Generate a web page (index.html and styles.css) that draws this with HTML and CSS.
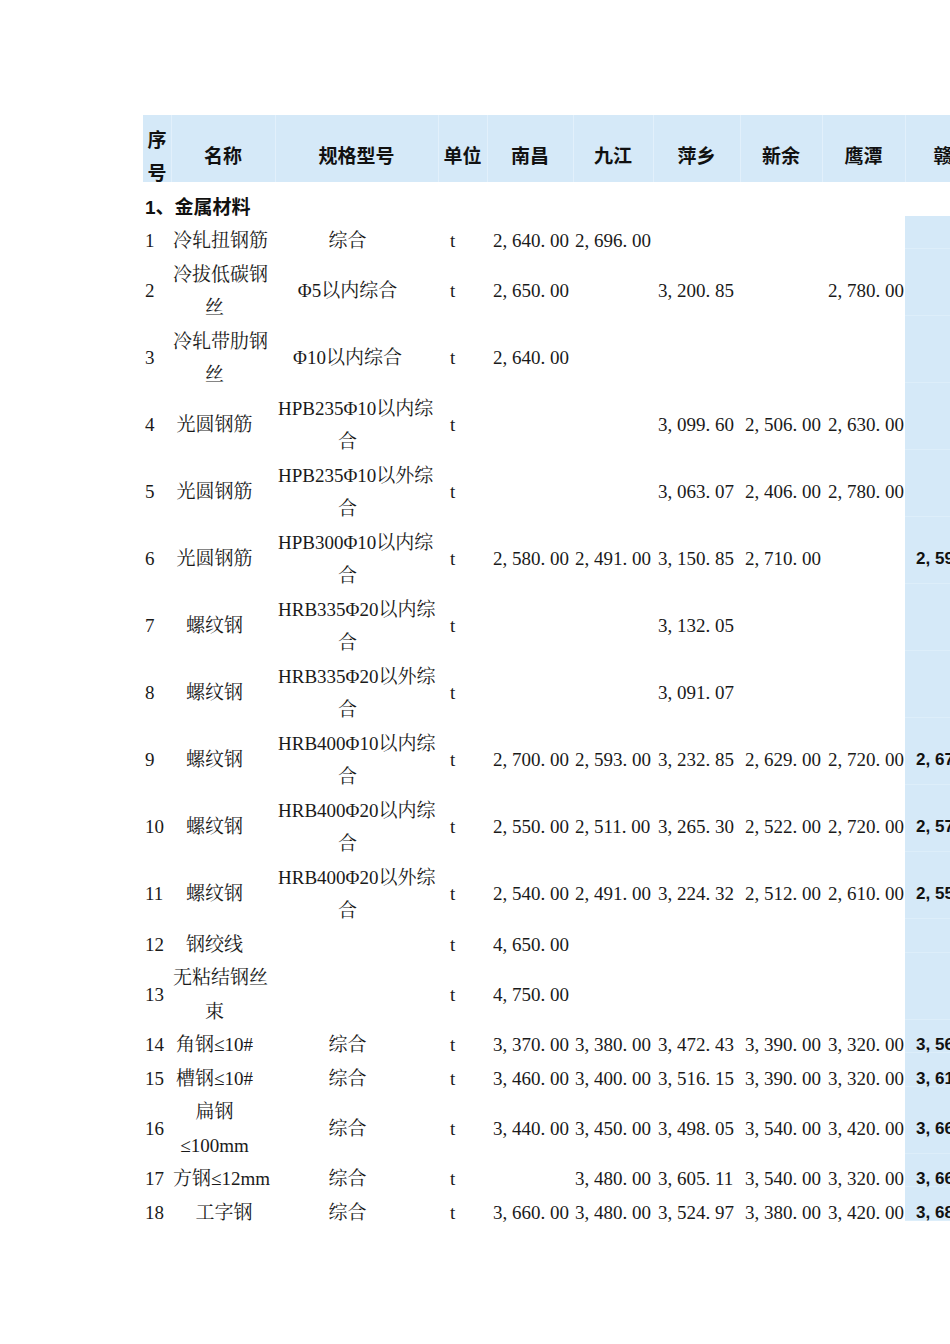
FILE: index.html
```html
<!DOCTYPE html>
<html lang="zh-CN">
<head>
<meta charset="utf-8">
<title>材料价格表</title>
<link rel="stylesheet" href="styles.css">
</head>
<body>
<div class="page">
<table class="price">
<colgroup>
<col class="w-no"><col class="w-name"><col class="w-spec"><col class="w-unit"><col class="w-city"><col class="w-jj"><col class="w-px"><col class="w-xy"><col class="w-yt"><col class="w-gz">
</colgroup>
<thead>
<tr><th>序号</th><th>名称</th><th>规格型号</th><th>单位</th><th>南昌</th><th>九江</th><th>萍乡</th><th>新余</th><th>鹰潭</th><th>赣州</th></tr>
</thead>
<tbody>
<tr class="sec"><td colspan="10">1、金属材料</td></tr>
<tr><td>1</td><td>冷轧扭钢筋</td><td>综合</td><td>t</td><td>2<i>,</i>640<i>.</i>00</td><td>2<i>,</i>696<i>.</i>00</td><td></td><td></td><td></td><td></td></tr>
<tr><td>2</td><td>冷拔低碳钢<br>丝</td><td>Φ5以内综合</td><td>t</td><td>2<i>,</i>650<i>.</i>00</td><td></td><td>3<i>,</i>200<i>.</i>85</td><td></td><td>2<i>,</i>780<i>.</i>00</td><td></td></tr>
<tr><td>3</td><td>冷轧带肋钢<br>丝</td><td>Φ10以内综合</td><td>t</td><td>2<i>,</i>640<i>.</i>00</td><td></td><td></td><td></td><td></td><td></td></tr>
<tr><td>4</td><td>光圆钢筋</td><td>HPB235Φ10以内综<br>合</td><td>t</td><td></td><td></td><td>3<i>,</i>099<i>.</i>60</td><td>2<i>,</i>506<i>.</i>00</td><td>2<i>,</i>630<i>.</i>00</td><td></td></tr>
<tr><td>5</td><td>光圆钢筋</td><td>HPB235Φ10以外综<br>合</td><td>t</td><td></td><td></td><td>3<i>,</i>063<i>.</i>07</td><td>2<i>,</i>406<i>.</i>00</td><td>2<i>,</i>780<i>.</i>00</td><td></td></tr>
<tr><td>6</td><td>光圆钢筋</td><td>HPB300Φ10以内综<br>合</td><td>t</td><td>2<i>,</i>580<i>.</i>00</td><td>2<i>,</i>491<i>.</i>00</td><td>3<i>,</i>150<i>.</i>85</td><td>2<i>,</i>710<i>.</i>00</td><td></td><td>2<i>,</i>590<i>.</i>00</td></tr>
<tr><td>7</td><td>螺纹钢</td><td>HRB335Φ20以内综<br>合</td><td>t</td><td></td><td></td><td>3<i>,</i>132<i>.</i>05</td><td></td><td></td><td></td></tr>
<tr><td>8</td><td>螺纹钢</td><td>HRB335Φ20以外综<br>合</td><td>t</td><td></td><td></td><td>3<i>,</i>091<i>.</i>07</td><td></td><td></td><td></td></tr>
<tr><td>9</td><td>螺纹钢</td><td>HRB400Φ10以内综<br>合</td><td>t</td><td>2<i>,</i>700<i>.</i>00</td><td>2<i>,</i>593<i>.</i>00</td><td>3<i>,</i>232<i>.</i>85</td><td>2<i>,</i>629<i>.</i>00</td><td>2<i>,</i>720<i>.</i>00</td><td>2<i>,</i>670<i>.</i>00</td></tr>
<tr><td>10</td><td>螺纹钢</td><td>HRB400Φ20以内综<br>合</td><td>t</td><td>2<i>,</i>550<i>.</i>00</td><td>2<i>,</i>511<i>.</i>00</td><td>3<i>,</i>265<i>.</i>30</td><td>2<i>,</i>522<i>.</i>00</td><td>2<i>,</i>720<i>.</i>00</td><td>2<i>,</i>570<i>.</i>00</td></tr>
<tr><td>11</td><td>螺纹钢</td><td>HRB400Φ20以外综<br>合</td><td>t</td><td>2<i>,</i>540<i>.</i>00</td><td>2<i>,</i>491<i>.</i>00</td><td>3<i>,</i>224<i>.</i>32</td><td>2<i>,</i>512<i>.</i>00</td><td>2<i>,</i>610<i>.</i>00</td><td>2<i>,</i>550<i>.</i>00</td></tr>
<tr><td>12</td><td>钢绞线</td><td></td><td>t</td><td>4<i>,</i>650<i>.</i>00</td><td></td><td></td><td></td><td></td><td></td></tr>
<tr><td>13</td><td>无粘结钢丝<br>束</td><td></td><td>t</td><td>4<i>,</i>750<i>.</i>00</td><td></td><td></td><td></td><td></td><td></td></tr>
<tr><td>14</td><td>角钢≤10#</td><td>综合</td><td>t</td><td>3<i>,</i>370<i>.</i>00</td><td>3<i>,</i>380<i>.</i>00</td><td>3<i>,</i>472<i>.</i>43</td><td>3<i>,</i>390<i>.</i>00</td><td>3<i>,</i>320<i>.</i>00</td><td>3<i>,</i>560<i>.</i>00</td></tr>
<tr><td>15</td><td>槽钢≤10#</td><td>综合</td><td>t</td><td>3<i>,</i>460<i>.</i>00</td><td>3<i>,</i>400<i>.</i>00</td><td>3<i>,</i>516<i>.</i>15</td><td>3<i>,</i>390<i>.</i>00</td><td>3<i>,</i>320<i>.</i>00</td><td>3<i>,</i>610<i>.</i>00</td></tr>
<tr><td>16</td><td>扁钢<br>≤100mm</td><td>综合</td><td>t</td><td>3<i>,</i>440<i>.</i>00</td><td>3<i>,</i>450<i>.</i>00</td><td>3<i>,</i>498<i>.</i>05</td><td>3<i>,</i>540<i>.</i>00</td><td>3<i>,</i>420<i>.</i>00</td><td>3<i>,</i>660<i>.</i>00</td></tr>
<tr><td>17</td><td>方钢≤12mm</td><td>综合</td><td>t</td><td></td><td>3<i>,</i>480<i>.</i>00</td><td>3<i>,</i>605<i>.</i>11</td><td>3<i>,</i>540<i>.</i>00</td><td>3<i>,</i>320<i>.</i>00</td><td>3<i>,</i>660<i>.</i>00</td></tr>
<tr><td>18</td><td class="indent">工字钢</td><td>综合</td><td>t</td><td>3<i>,</i>660<i>.</i>00</td><td>3<i>,</i>480<i>.</i>00</td><td>3<i>,</i>524<i>.</i>97</td><td>3<i>,</i>380<i>.</i>00</td><td>3<i>,</i>420<i>.</i>00</td><td>3<i>,</i>680<i>.</i>00</td></tr>
</tbody>
</table>
</div>
</body>
</html>
```

FILE: styles.css
```css
* {
  box-sizing: border-box;
}

html,
body {
  margin: 0;
  padding: 0;
  background: #ffffff;
}

body {
  font-family: "Liberation Serif", "Noto Serif CJK SC", "Noto Sans CJK SC", serif;
  font-size: 19px;
  color: #1a1a1a;
}

.page {
  width: 950px;
  min-height: 1344px;
  overflow: hidden;
  padding: 115px 0 0 143px;
}

.price {
  border-collapse: collapse;
  table-layout: fixed;
  width: 857px;
}

.w-no { width: 28px; }
.w-name { width: 104px; }
.w-spec { width: 163px; }
.w-unit { width: 49px; }
.w-city { width: 86px; }
.w-jj { width: 80px; }
.w-px { width: 87px; }
.w-xy { width: 82px; }
.w-yt { width: 83px; }
.w-gz { width: 95px; }

.price th,
.price td {
  padding: 8.5px 0 0;
  line-height: 33.5px;
  vertical-align: middle;
  text-align: left;
  font-weight: 400;
}

/* text sits low in each line box, as in the source sheet */
.price th::after,
.price td::after {
  content: "";
  display: block;
  margin-top: -8.5px;
}

.price td {
  white-space: nowrap;
}

.price i {
  font-style: normal;
  display: inline-block;
  width: 9.5px;
}

/* header band */
.price th {
  background: #d5e9f8;
  font-family: "Liberation Sans", "Noto Sans CJK SC", sans-serif;
  font-weight: 700;
  text-align: center;
  color: #111;
}

.price th + th {
  box-shadow: inset 1px 0 0 #e2f0fb;
}

/* section title */
.price .sec td {
  font-family: "Liberation Sans", "Noto Sans CJK SC", sans-serif;
  font-weight: 700;
  color: #111;
}

/* columns */
.price td:nth-child(1) {
  padding-left: 2px;
}

.price td:nth-child(2) {
  text-align: center;
  padding-left: 2px;
  padding-right: 19px;
}

.price td.indent {
  padding-left: 21px;
}

.price td:nth-child(3) {
  text-align: center;
  padding-left: 3px;
  padding-right: 21px;
}

.price td:nth-child(4) {
  padding-left: 12px;
}

.price td:nth-child(5) { padding-left: 6px; }
.price td:nth-child(6) { padding-left: 2px; }
.price td:nth-child(7) { padding-left: 5px; }
.price td:nth-child(8) { padding-left: 5px; }
.price td:nth-child(9) { padding-left: 6px; }

.price tbody tr:not(.sec) td:nth-child(10) {
  padding-left: 11px;
  background: #d5e9f8;
  box-shadow: inset 0 -1px 0 #ddeefa;
  font-family: "Liberation Sans", "Noto Sans CJK SC", sans-serif;
  font-weight: 700;
  font-size: 17px;
  color: #111;
}
```
